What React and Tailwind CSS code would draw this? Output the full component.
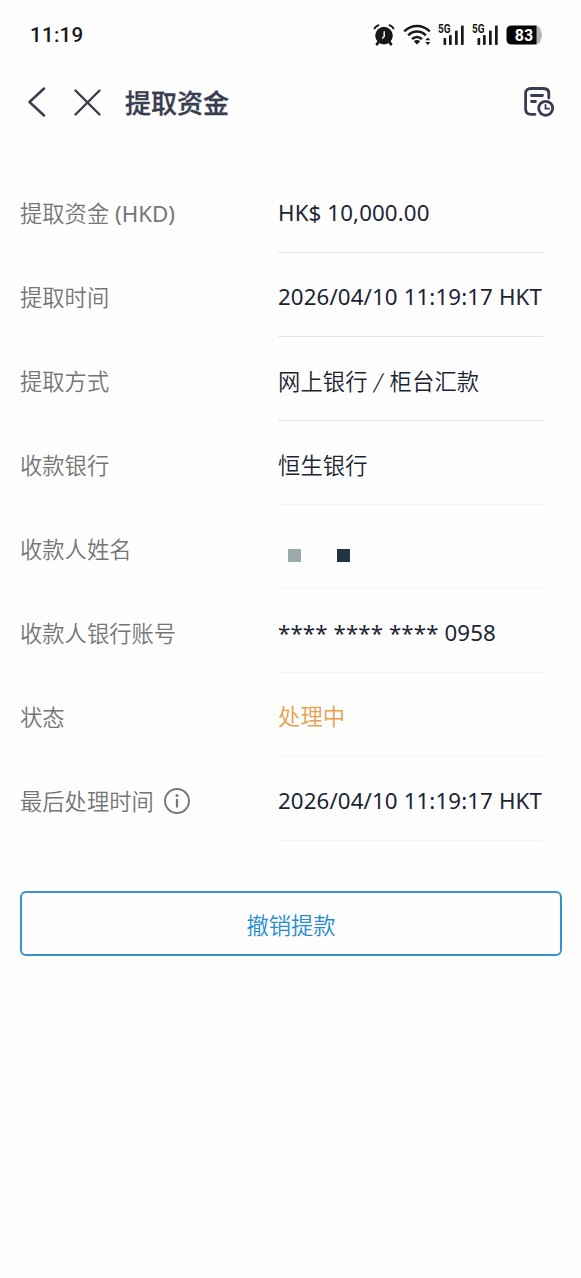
const rows = [
  { label: '提取资金 (HKD)', value: 'HK$ 10,000.00', line: 'border-[#e4e8e9]' },
  { label: '提取时间', value: '2026/04/10 11:19:17 HKT', line: 'border-[#e4e8e9]' },
  { label: '提取方式', value: ['网上银行', '柜台汇款'], line: 'border-[#e2e4e6]' },
  { label: '收款银行', value: '恒生银行', line: 'border-[#f3f4f4]', pad: 'pt-[7px]' },
  { label: '收款人姓名', masked: true, line: 'border-[#f3f4f4]' },
  { label: '收款人银行账号', value: '**** **** **** 0958', line: 'border-[#f3f4f4]' },
  { label: '状态', value: '处理中', color: 'text-[#e9a04b]', line: 'border-[#f5f5f6]' },
  { label: '最后处理时间', value: '2026/04/10 11:19:17 HKT', info: true, line: 'border-[#f5f5f6]' },
];

function AlarmIcon() {
  return (
    <svg width="22" height="22" viewBox="0 0 22 22" fill="none" stroke="#181818" strokeLinecap="round">
      <circle cx="11" cy="11.6" r="8.8" fill="#181818" stroke="none" />
      <path d="M1.6 4.4Q2.7 2 5.4 1.2M20.4 4.4Q19.3 2 16.6 1.2" strokeWidth="2" />
      <path d="M5.2 18.5 4 20.2M16.8 18.5l1.2 1.7" strokeWidth="2.8" />
      <path d="M11.2 7.8v4.6L9.6 14" stroke="#fff" strokeWidth="1.4" />
    </svg>
  );
}

function WifiIcon() {
  return (
    <svg width="28" height="22" viewBox="0 0 28 22" fill="none" stroke="#181818" strokeWidth="2.5">
      <path d="M1.2 7.4Q7 2.1 14 2.1T26.8 7.4" />
      <path d="M5.2 11.4Q9 7.6 14 7.6T22.8 11.4" />
      <path d="M9 15.2Q11.2 12.9 14 12.9T19 15.2" />
      <path d="M10.8 17.2Q14 14.8 17.2 17.2L14 20.4Z" fill="#181818" stroke="none" />
      <path d="M22.2 16.3 24.8 13.4 27.4 16.3ZM22.2 18.1 24.8 21 27.4 18.1Z" fill="#181818" stroke="none" />
    </svg>
  );
}

function SignalIcon() {
  return (
    <svg width="27" height="30" viewBox="0 -4 27 30" fill="#181818">
      <text x="0" y="9" fontFamily="Roboto, sans-serif" fontSize="12" fontWeight="700" textLength="12.5" lengthAdjust="spacingAndGlyphs">
        5G
      </text>
      <rect x="5.5" y="14" width="2.7" height="7" rx="0.8" />
      <rect x="11" y="11" width="2.7" height="10" rx="0.8" />
      <rect x="17" y="6.5" width="2.7" height="14.5" rx="0.8" />
      <rect x="23" y="1.5" width="2.7" height="19.5" rx="0.8" />
    </svg>
  );
}

function Battery({ level }) {
  return (
    <svg width="36" height="20" viewBox="0 0 36 20">
      <path d="M28 1h2q4.6 0 4.6 4.6 1.4 1.2 1.4 4.4t-1.4 4.4Q34.6 19 30 19h-2Z" fill="#b4b4b4" />
      <path d="M5.5 0.5H30.5V19.5H5.5Q0.5 19.5 0.5 14.5V5.5Q0.5 0.5 5.5 0.5Z" fill="#050505" />
      <text x="18" y="15.7" textAnchor="middle" fill="#fff" fontFamily="Roboto, sans-serif" fontSize="16" fontWeight="700">
        {level}
      </text>
    </svg>
  );
}

function StatusBar() {
  return (
    <div className="flex h-[68px] items-center pl-[30px] pr-[39px] pt-px text-[#181818]">
      <span className="font-[Roboto,sans-serif] text-[20.5px] font-medium tracking-[0.3px]">11:19</span>
      <div className="ml-auto flex items-center">
        <AlarmIcon />
        <div className="ml-2"><WifiIcon /></div>
        <div className="ml-[7px]"><SignalIcon /></div>
        <div className="ml-[7px]"><SignalIcon /></div>
        <div className="ml-[7px]"><Battery level={83} /></div>
      </div>
    </div>
  );
}

function Header() {
  return (
    <header className="flex h-[68px] items-center pl-7 pr-[26px] text-[#383d50]">
      <button aria-label="返回">
        <svg width="18" height="30" viewBox="0 0 18 30" fill="none" stroke="currentColor" strokeWidth="2.5" strokeLinecap="round" strokeLinejoin="round">
          <path d="M16 1.5 1.5 15 16 28.5" />
        </svg>
      </button>
      <button aria-label="关闭" className="ml-7">
        <svg width="27" height="27" viewBox="0 0 27 27" fill="none" stroke="currentColor" strokeWidth="2.4" strokeLinecap="round">
          <path d="M1.5 1.5 25.5 25.5M25.5 1.5 1.5 25.5" />
        </svg>
      </button>
      <h1 className="ml-6 pt-0.5 font-['Noto_Sans','Noto_Sans_CJK_SC',sans-serif] text-[26px] font-medium leading-none [-webkit-text-stroke:0.3px]">
        提取资金
      </h1>
      <button aria-label="记录" className="ml-auto">
        <svg width="32" height="32" viewBox="0 0 32 32" fill="none" stroke="currentColor" strokeWidth="2.8" strokeLinecap="round">
          <path d="M12 28.3H8Q2.6 28.3 2.6 23V7.5Q2.6 2.5 8 2.5H20.5Q25.8 2.5 25.8 7.5V12" />
          <path d="M8.5 9.5H19.5M8.5 15.5H12.5" />
          <circle cx="22.7" cy="22.3" r="7" />
          <path d="M22.5 18.8V22.7H26" strokeWidth="1.8" />
        </svg>
      </button>
    </header>
  );
}

function InfoIcon() {
  return (
    <svg className="-mt-0.5" width="26" height="26" viewBox="0 0 26 26" fill="none" stroke="#777" strokeWidth="1.9">
      <circle cx="13" cy="13" r="12" />
      <path d="M13 11V19.5" strokeWidth="2.2" />
      <circle cx="13" cy="7.5" r="1.5" fill="#777" stroke="none" />
    </svg>
  );
}

function RowValue({ row }) {
  if (row.masked) {
    return (
      <div className="ml-2.5 flex gap-9 pt-3">
        <span className="size-[13px] bg-[#9aabaa]" />
        <span className="size-[13px] bg-[#203444]" />
      </div>
    );
  }
  if (Array.isArray(row.value)) {
    const [first, second] = row.value;
    return (
      <div className="pt-px">
        {first}
        <span className="mx-[7px] inline-block -translate-y-px -skew-x-12 font-['Noto_Sans_CJK_SC',sans-serif] text-[20px] leading-5">/</span>
        {second}
      </div>
    );
  }
  return row.value;
}

function DetailRow({ row }) {
  return (
    <div className="flex h-[84px] whitespace-nowrap">
      <div className="flex w-[258px] items-center gap-2.5 pt-[5px] text-[#757575]">
        {row.label}
        {row.info && <InfoIcon />}
      </div>
      <div className={`flex w-[265px] items-center border-b tracking-[0.11px] ${row.pad || 'pt-[5px]'} ${row.line} ${row.color || 'text-[#1c2434]'}`}>
        <RowValue row={row} />
      </div>
    </div>
  );
}

export default function App() {
  return (
    <div className="min-h-screen bg-[#fefefe] font-['Noto_Sans','Noto_Sans_CJK_SC_DemiLight','Noto_Sans_CJK_SC',sans-serif] text-[22.3px] leading-[30px]">
      <StatusBar />
      <Header />
      <main className="px-5 pt-[33px]">
        {rows.map((row) => (
          <DetailRow key={row.label} row={row} />
        ))}
        <button className="mt-[50px] flex h-[65px] w-[542px] items-center justify-center rounded-md border-2 border-[#3693d0] pt-1 text-[#228cd2]">
          撤销提款
        </button>
      </main>
    </div>
  );
}
